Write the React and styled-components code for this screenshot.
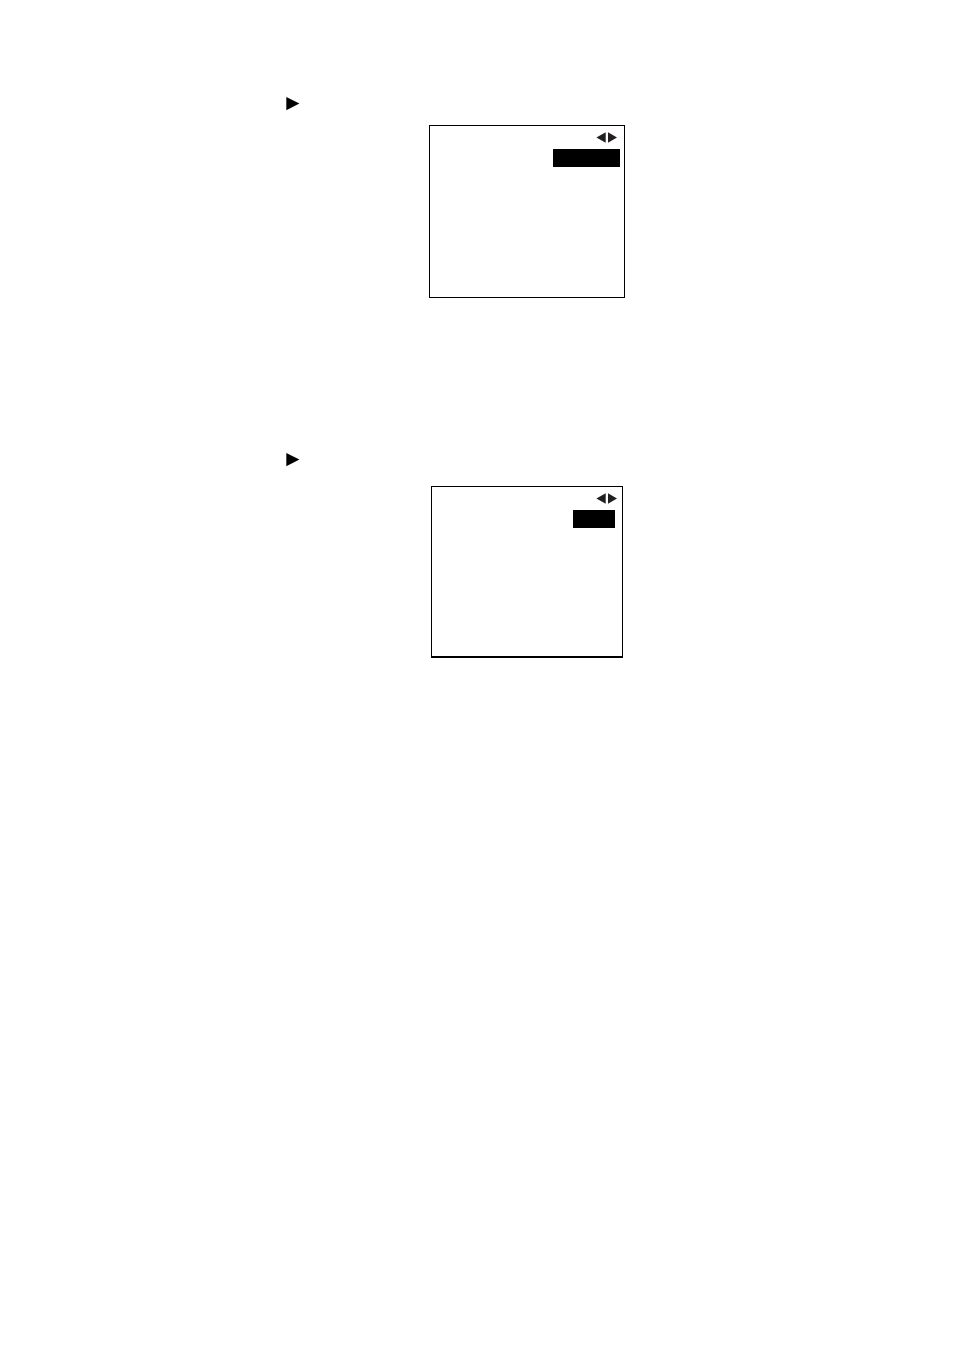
import React from 'react'
import styled, { createGlobalStyle } from 'styled-components'

const screens = [
  { id: 'first', width: 196, gap: 14, edge: 1, arrowInset: 7, barWidth: 67, barInset: 4, barHeight: 148 },
  { id: 'second', width: 192, gap: 19, edge: 2, arrowInset: 5, barWidth: 42, barInset: 7, barHeight: 146 },
]

const StepMarker = () => (
  <MarkerIcon viewBox="0 0 14 14" aria-hidden="true">
    <path d="M0.3 0 L13.4 6.6 L0.3 13.2 Z" fill="#000" />
  </MarkerIcon>
)

const ScrollArrows = () => (
  <ArrowsIcon viewBox="0 0 21 12" aria-hidden="true">
    <path d="M0.4 5.5 L9.7 0.3 V10.8 Z M12 0.3 L21 5.5 L12 10.8 Z" fill="#231f20" />
  </ArrowsIcon>
)

const App = () => {
  return (
    <>
      <GlobalStyle />
      <Page>
        {screens.map((screen) => (
          <Step key={screen.id} $gap={screen.gap}>
            <StepMarker />
            <Display $width={screen.width} $edge={screen.edge}>
              <ArrowRow $inset={screen.arrowInset}>
                <ScrollArrows />
              </ArrowRow>
              <SelectionRow $inset={screen.barInset} $height={screen.barHeight}>
                <Selection $width={screen.barWidth} />
              </SelectionRow>
            </Display>
          </Step>
        ))}
      </Page>
    </>
  )
}

export default App

const GlobalStyle = createGlobalStyle`
    * {
        box-sizing: border-box;
    }
    body {
        margin: 0;
        background: #fff;
    }
`
const Page = styled.main`
    display: flex;
    flex-direction: column;
    gap: 155px;
    min-height: 100vh;
    padding: 97px 186px 97px 286px;

    @media(max-width: 800px) {
        padding: 48px 24px;
    }
`
const Step = styled.section`
    display: flex;
    flex-direction: column;
    gap: ${(props) => props.$gap}px;
`
const MarkerIcon = styled.svg`
    display: block;
    width: 14px;
    height: 14px;
`
const Display = styled.div`
    display: flex;
    flex-direction: column;
    align-self: center;
    gap: 5px;
    width: ${(props) => props.$width}px;
    max-width: 100%;
    padding-top: 6px;
    border: 1px solid #000;
    border-bottom-width: ${(props) => props.$edge}px;
`
const ArrowRow = styled.div`
    display: flex;
    justify-content: flex-end;
    padding-right: ${(props) => props.$inset}px;
`
const ArrowsIcon = styled.svg`
    display: block;
    width: 21px;
    height: 12px;
`
const SelectionRow = styled.div`
    display: flex;
    justify-content: flex-end;
    align-items: flex-start;
    min-height: ${(props) => props.$height}px;
    padding-right: ${(props) => props.$inset}px;
`
const Selection = styled.div`
    width: ${(props) => props.$width}px;
    height: 18px;
    background: #000;
`
